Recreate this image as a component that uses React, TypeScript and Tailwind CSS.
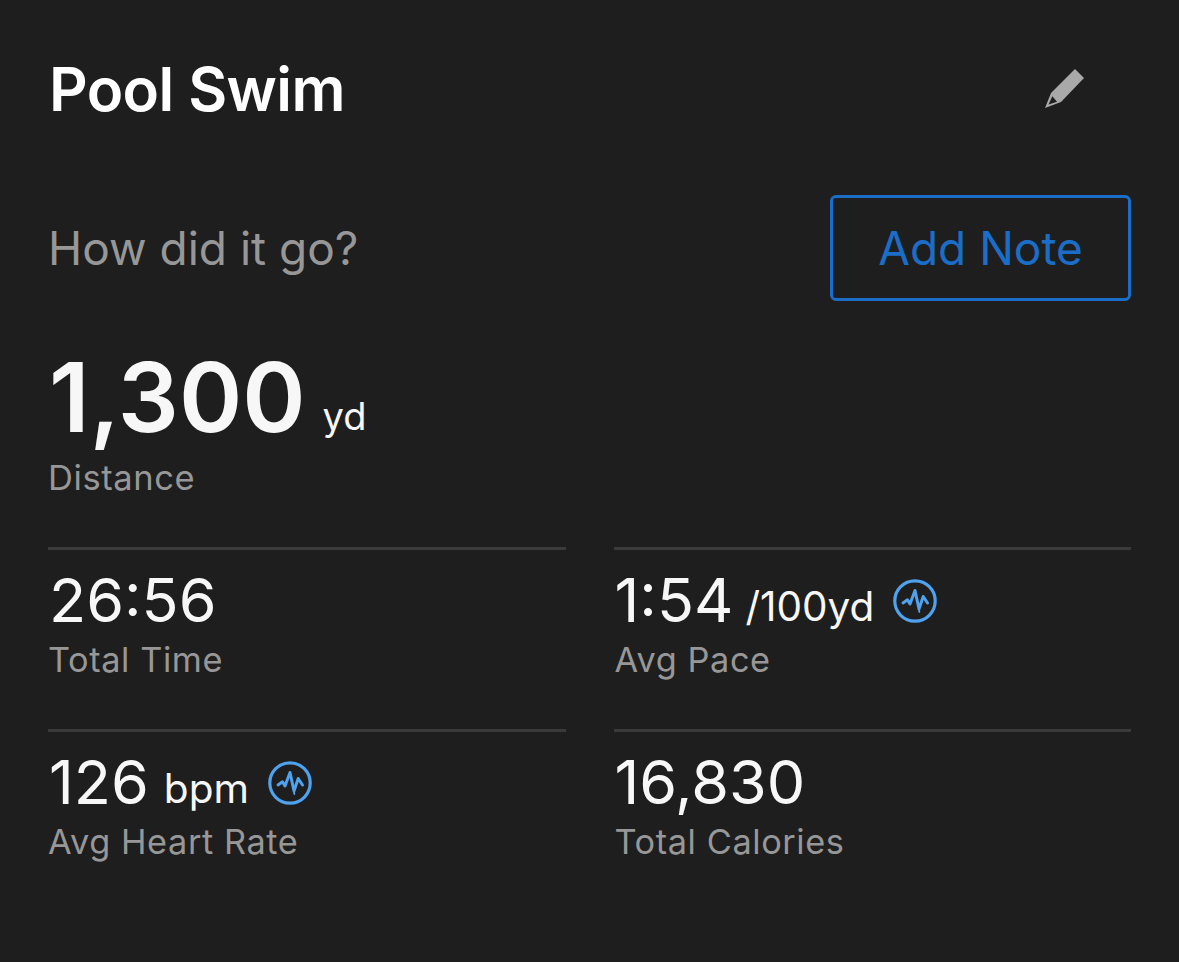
const Wave = () => (
  <svg width="46" height="46" viewBox="0 0 46 46" fill="none" className="shrink-0">
    <circle cx="23" cy="23" r="20.2" stroke="#4ea2ee" strokeWidth="3.2" />
    <path d="M11 25 L15.5 21.8 L18 26 L23 12.5 L27 31 L31.2 18.5 L35.5 25" stroke="#4ea2ee" strokeWidth="3" strokeLinejoin="round" strokeLinecap="round" />
    <path d="M27 31 L27.3 34" stroke="#4ea2ee" strokeWidth="1.8" strokeLinecap="round" />
  </svg>
);

const Pencil = () => (
  <svg width="42" height="42" viewBox="0 0 42 42" className="shrink-0">
    <path d="M31 1 L40 10 L17 34 L1 40 L7 25 Z" fill="#a9a9a9" />
    <path d="M8.3 28.3 L13 33.7 L4.6 36.6 Z" fill="#1e1e1e" />
  </svg>
);

const Stat = ({ value, unit, label, icon, unitGap, labelPad }: { value: string; unit?: string; label: string; icon?: boolean; unitGap?: string; labelPad?: string }) => (
  <div className="flex-1 border-t-[3px] border-[#3a3a3a] h-[182px]">
    <div className="flex items-end h-[86px] pl-px">
      <span className="text-[61px] leading-[72px] text-[#f7f7f7]">{value}</span>
      {unit && <span className={`text-[40.5px] leading-[50px] text-[#f7f7f7] mb-[4px] ${unitGap}`}>{unit}</span>}
      {icon && <span className="ml-[18px] mb-[12px]"><Wave /></span>}
    </div>
    <div className={`text-[34.3px] leading-[40px] tracking-[0.6px] text-[#979797] mt-[4px] ${labelPad}`}>{label}</div>
  </div>
);

export default function App() {
  return (
    <div className="w-[1179px] h-[962px] bg-[#1e1e1e] overflow-hidden px-[48px] font-['Inter','Liberation_Sans',sans-serif]">
      <div className="flex items-center justify-between h-[178px] pl-px">
        <h1 className="text-[60px] font-semibold leading-none text-white tracking-[-0.6px]">Pool Swim</h1>
        <span className="mr-[45px]"><Pencil /></span>
      </div>
      <div className="flex items-center justify-between h-[106px] mt-[17px]">
        <span className="text-[46px] text-[#979797]">How did it go?</span>
        <button className="w-[301px] h-[106px] border-[3px] border-[#1a6ec8] rounded-[6px] text-[46px] text-[#1a6ec8]">Add Note</button>
      </div>
      <div className="mt-[46px] flex items-end h-[100px] pl-px">
        <span className="text-[96px] font-semibold leading-[100px] text-[#f7f7f7]">1,300</span>
        <span className="text-[38px] leading-[50px] text-[#f7f7f7] ml-[17px] mb-[6px]">yd</span>
      </div>
      <div className="text-[34.5px] leading-[40px] tracking-[0.6px] text-[#979797] mt-[11px]">Distance</div>
      <div className="grid grid-cols-2 gap-x-[48px] mt-[49px]">
        <Stat value="26:56" label="Total Time" />
        <Stat value="1:54" unit="/100yd" label="Avg Pace" icon unitGap="ml-[12px]" labelPad="pl-px" />
        <Stat value="126" unit="bpm" label="Avg Heart Rate" icon unitGap="ml-[15px]" />
        <Stat value="16,830" label="Total Calories" labelPad="pl-px" />
      </div>
    </div>
  );
}
